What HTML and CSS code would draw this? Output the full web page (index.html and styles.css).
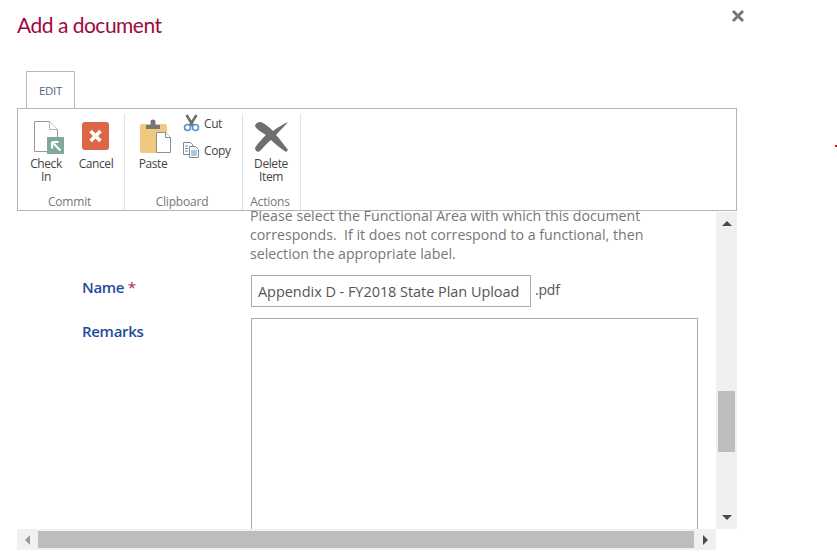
FILE: index.html
```html
<!DOCTYPE html>
<html>

<head>
    <meta charset="utf-8">
    <title>Add a document</title>
    <link rel="stylesheet" href="styles.css">
</head>

<body>
    <div class="dialog">
        <div class="title-row">
            <h1>Add a document</h1>
            <button class="close" aria-label="Close">
                <svg width="14" height="14" viewBox="0 0 14 14">
                    <path d="M2 2l10 10M12 2L2 12" stroke="#777" stroke-width="3" fill="none" />
                </svg>
            </button>
        </div>

        <div class="tabs">
            <div class="tab">EDIT</div>
        </div>

        <div class="ribbon">
            <div class="group group-commit">
                <div class="group-items">
                    <div class="big-btn">
                        <svg class="big-icon" width="46" height="36" viewBox="0 0 46 36">
                            <path d="M11.500 3.500h15l8 8v22h-23z" fill="#fff" stroke="#999" />
                            <path d="M26.500 3.500v8h8" fill="#fff" stroke="#b5b5b5" />
                            <rect x="24" y="19" width="17" height="17" fill="#7fa998" />
                            <path d="M29 24h6.500M29 24v6.500M29.500 24.500l8 8" stroke="#fff" stroke-width="2.200" fill="none" />
                        </svg>
                        <span>Check<br>In</span>
                    </div>
                    <div class="big-btn">
                        <svg class="big-icon" width="46" height="36" viewBox="0 0 46 36">
                            <rect x="9" y="4" width="27" height="28" rx="3" fill="#dc6645" />
                            <path d="M17.500 13l10 10M27.500 13l-10 10" stroke="#fff" stroke-width="3.600" fill="none" />
                        </svg>
                        <span>Cancel</span>
                    </div>
                </div>
                <div class="group-label">Commit</div>
            </div>

            <div class="group group-clipboard">
                <div class="group-items">
                    <div class="big-btn">
                        <svg class="big-icon" width="46" height="36" viewBox="0 0 46 36">
                            <rect x="10" y="6" width="27" height="29" rx="2" fill="#efc97e" />
                            <path d="M16 11V7h4.500V3.500a2.500 2 0 0 1 5 0V7H30v4z" fill="#777" />
                            <path d="M26.500 14.500h9l5 5v15h-14z" fill="#fff" stroke="#8f8f8f" />
                            <path d="M35.500 14.500v5h5" fill="#fff" stroke="#8f8f8f" />
                        </svg>
                        <span>Paste</span>
                    </div>
                    <div class="small-btns">
                        <div class="small-btn">
                            <svg width="17" height="18" viewBox="0 0 17 18">
                                <path d="M3.500 1l6.500 10.500M13.500 1L7 11.500" stroke="#6e6e6e" stroke-width="2.600" fill="none" />
                                <circle cx="4.500" cy="13.500" r="3" fill="none" stroke="#5b8fc7" stroke-width="1.600" />
                                <circle cx="12.500" cy="13.500" r="3" fill="none" stroke="#5b8fc7" stroke-width="1.600" />
                            </svg>
                            <span>Cut</span>
                        </div>
                        <div class="small-btn">
                            <svg width="17" height="18" viewBox="0 0 17 18">
                                <path d="M.5 1.500h7l2 2v10H.500z" fill="#fff" stroke="#888" />
                                <path d="M6.500 5.500h6l3 3v8h-9z" fill="#fff" stroke="#888" />
                                <path d="M2 5h3M2 7.500h3M2 10h3" stroke="#5b8fc7" />
                                <path d="M8 10h6M8 12h6M8 14h6" stroke="#5b8fc7" />
                            </svg>
                            <span>Copy</span>
                        </div>
                    </div>
                </div>
                <div class="group-label">Clipboard</div>
            </div>

            <div class="group group-actions">
                <div class="group-items">
                    <div class="big-btn">
                        <svg class="big-icon" width="46" height="36" viewBox="0 0 46 36">
                            <path d="M7 8C8 4 12 3 15 5c4 2 7 5 10 8 4-3 10-7 15-9-3 4-8 8-12 13 4 4 8 10 12 15l-2 2c-6-4-11-8-15-12-4 3-8 8-11 11-2 2-5 0-5-3 2-4 6-8 11-13C14 14 9 12 7 8z" fill="#6f6f6f" />
                        </svg>
                        <span>Delete<br>Item</span>
                    </div>
                </div>
                <div class="group-label">Actions</div>
            </div>
        </div>

        <div class="viewport">
            <div class="content">
                <div class="form">
                    <div></div>
                    <p class="help">Please select the Functional Area with which this document<br>corresponds.&nbsp; If it does not correspond to a functional, then<br>selection the appropriate label.</p>

                    <label class="field-label">Name <span class="req">*</span></label>
                    <div class="name-row">
                        <div class="text-input">Appendix D - FY2018 State Plan Upload</div>
                        <span class="ext">.pdf</span>
                    </div>

                    <label class="field-label">Remarks</label>
                    <div class="text-area"></div>
                </div>
            </div>
            <div class="vscroll">
                <span class="arrow arrow-up"></span>
                <div class="vthumb"></div>
                <span class="arrow arrow-down"></span>
            </div>
        </div>

        <div class="hscroll">
            <span class="arrow arrow-left"></span>
            <div class="hthumb"></div>
            <span class="arrow arrow-right"></span>
        </div>
    </div>

    <div class="red-dot"></div>
</body>

</html>
```

FILE: styles.css
```css
* {
    box-sizing: border-box;
}

html,
body {
    margin: 0;
    height: 100%;
    overflow: hidden;
    background: #fff;
    font-family: "Open Sans", "Noto Sans", sans-serif;
}

.dialog {
    width: 720px;
    margin-left: 17px;
}

.title-row {
    height: 71px;
    display: flex;
    justify-content: space-between;
    align-items: flex-start;
}

h1 {
    margin: 8px 0 0;
    font-family: "Lato", "Open Sans", sans-serif;
    font-size: 21px;
    line-height: 34px;
    font-weight: 400;
    letter-spacing: -0.5px;
    color: #9c0a3e;
}

.close {
    margin: 9px -14px 0 0;
    padding: 0;
    width: 14px;
    height: 16px;
    position: relative;
    left: -6px;
    border: 0;
    background: none;
}

.tabs {
    height: 37px;
    padding-left: 9px;
}

.tab {
    width: 49px;
    height: 37px;
    border: 1px solid #b9b9b9;
    border-bottom: 0;
    text-align: center;
    font-size: 11.5px;
    line-height: 38px;
    letter-spacing: -0.3px;
    color: #52657c;
}

.ribbon {
    height: 103px;
    border: 1px solid #b3b3b9;
    display: flex;
    align-items: stretch;
    padding-top: 5px;
}

.group {
    border-right: 1px solid #e2e2e2;
    display: flex;
    flex-direction: column;
    padding: 0 0 0 5px;
}

.group-commit {
    width: 107px;
}

.group-clipboard {
    width: 118px;
}

.group-actions {
    width: 58px;
}

.group-items {
    flex: 1;
    display: flex;
    gap: 4px;
}

.group-clipboard .group-items {
    gap: 7px;
}

.group-label {
    height: 18px;
    margin-left: -8px;
    text-align: center;
    font-size: 12px;
    line-height: 20px;
    letter-spacing: -0.2px;
    color: #777;
}

.big-btn {
    width: 46px;
    padding-top: 4px;
    text-align: center;
    font-size: 12px;
    line-height: 13px;
    letter-spacing: -0.4px;
    color: #444;
}

.big-icon {
    display: block;
    margin-bottom: 3px;
}

.small-btns {
    display: flex;
    flex-direction: column;
    gap: 9px;
}

.small-btn {
    display: flex;
    align-items: center;
    gap: 4px;
    height: 18px;
    font-size: 12px;
    letter-spacing: -0.4px;
    color: #444;
}

.small-btn svg {
    flex: none;
}

.viewport {
    display: flex;
    height: 318px;
}

.content {
    width: 699px;
    overflow: hidden;
}

.form {
    margin-top: -5px;
    padding-left: 65px;
    display: grid;
    grid-template-columns: 169px 447px;
}

.help {
    margin: 0 0 0 -1px;
    font-size: 14.200px;
    line-height: 19px;
    color: #777;
}

.field-label {
    font-size: 15px;
    font-weight: 600;
    letter-spacing: -0.3px;
    color: #1f4b9c;
    line-height: 20px;
    padding-top: 14px;
}

.req {
    color: #a2284f;
    font-weight: 400;
}

.name-row {
    margin-top: 12px;
    display: flex;
    align-items: flex-start;
    gap: 4px;
}

.text-input {
    width: 280px;
    height: 32px;
    border: 1px solid #ababab;
    padding-left: 6px;
    font-size: 14.500px;
    line-height: 31px;
    letter-spacing: -0.05px;
    white-space: nowrap;
    color: #555;
}

.ext {
    font-size: 14px;
    line-height: 30px;
    letter-spacing: -0.2px;
    color: #555;
}

.text-area {
    margin-top: 11px;
    height: 260px;
    border: 1px solid #ababab;
}

.vscroll {
    width: 21px;
    margin-top: 1px;
    background: #f0f0f0;
    display: flex;
    flex-direction: column;
    align-items: center;
}

.vthumb {
    width: 17px;
    height: 61px;
    margin-top: 165px;
    background: #bdbdbd;
}

.hscroll {
    width: 699px;
    height: 21px;
    background: #f0f0f0;
    display: flex;
    align-items: center;
}

.hthumb {
    width: 656px;
    height: 17px;
    margin-left: 8px;
    background: #bdbdbd;
}

.arrow {
    display: block;
    width: 0;
    height: 0;
    border-style: solid;
    border-color: transparent;
}

.arrow-up {
    margin-top: 9px;
    border-width: 0 5px 5px;
    border-bottom-color: #4a4a4a;
}

.arrow-down {
    margin-top: 63px;
    border-width: 5px 5px 0;
    border-top-color: #4a4a4a;
}

.arrow-left {
    margin-left: 8px;
    border-width: 5px 5px 5px 0;
    border-right-color: #999;
}

.arrow-right {
    margin-left: 9px;
    border-width: 5px 0 5px 5px;
    border-left-color: #4a4a4a;
}

.red-dot {
    position: absolute;
    left: 835px;
    top: 145px;
    width: 2px;
    height: 2px;
    background: #f00;
}
```
